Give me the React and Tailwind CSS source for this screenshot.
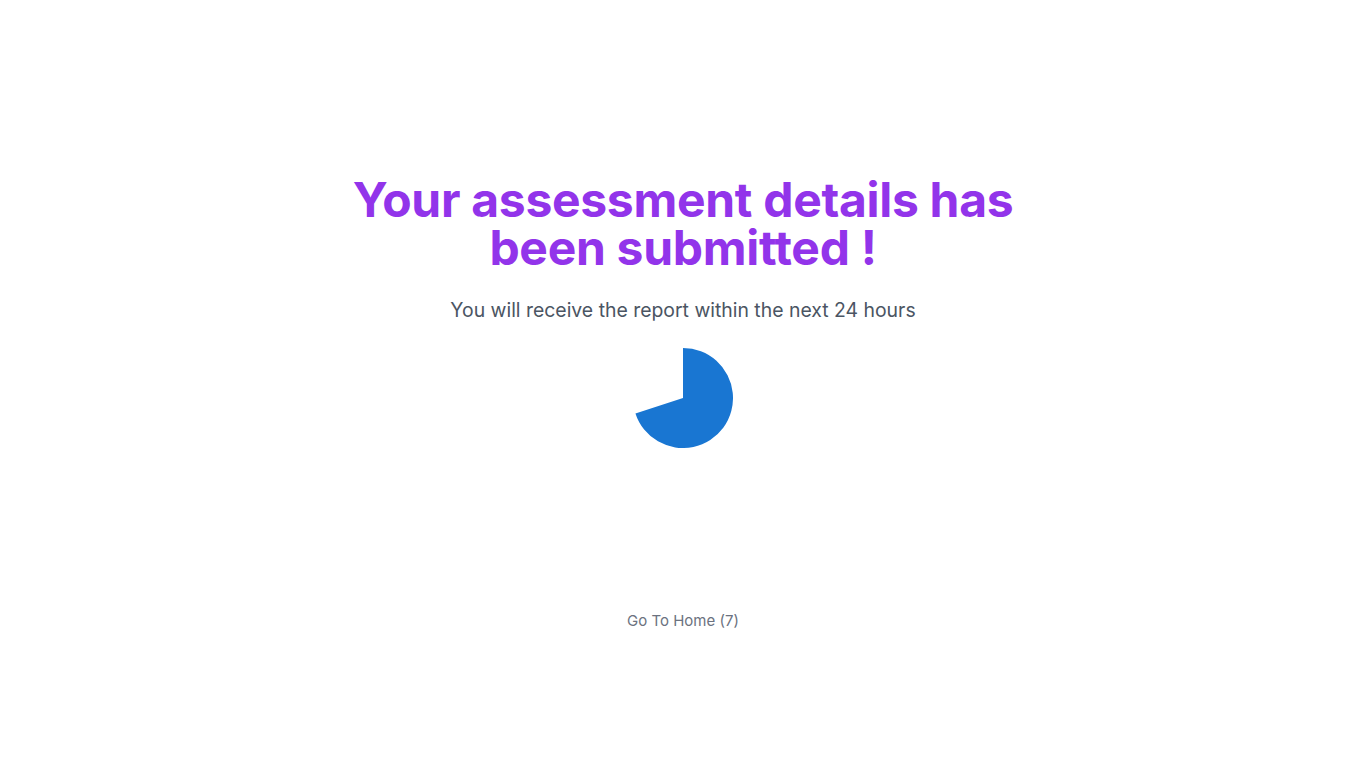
import React from 'react';

// countdown pie, 7 of 10 seconds left
const Pie = ({ value = 7, total = 10 }) => {
  const angle = (value / total) * 2 * Math.PI;
  const r = 50;
  const x = 50 + r * Math.sin(angle);
  const y = 50 - r * Math.cos(angle);
  const large = angle > Math.PI ? 1 : 0;
  return (
    <svg width="100" height="100" viewBox="0 0 100 100">
      <path d={`M50 50 L50 0 A50 50 0 ${large} 1 ${x} ${y} Z`} fill="#1976d2" />
    </svg>
  );
};

export default function App() {
  return (
    <div
      className="flex flex-col items-center min-h-screen bg-white"
      style={{ fontFamily: 'Inter, "Open Sans", sans-serif' }}
    >
      <h1 className="mt-[176px] text-center text-[48px] leading-[48px] font-bold tracking-[-0.3px] text-[#9234ea]">
        Your assessment details has
        <br />
        been submitted !
      </h1>
      <p className="mt-[24px] text-[19.4px] leading-7 text-[#4b5563]">
        You will receive the report within the next 24 hours
      </p>
      <div className="mt-[24px]">
        <Pie />
      </div>
      <button className="mt-[161px] text-[15px] leading-6 text-[#6b7280]">
        Go To Home (7)
      </button>
    </div>
  );
}
